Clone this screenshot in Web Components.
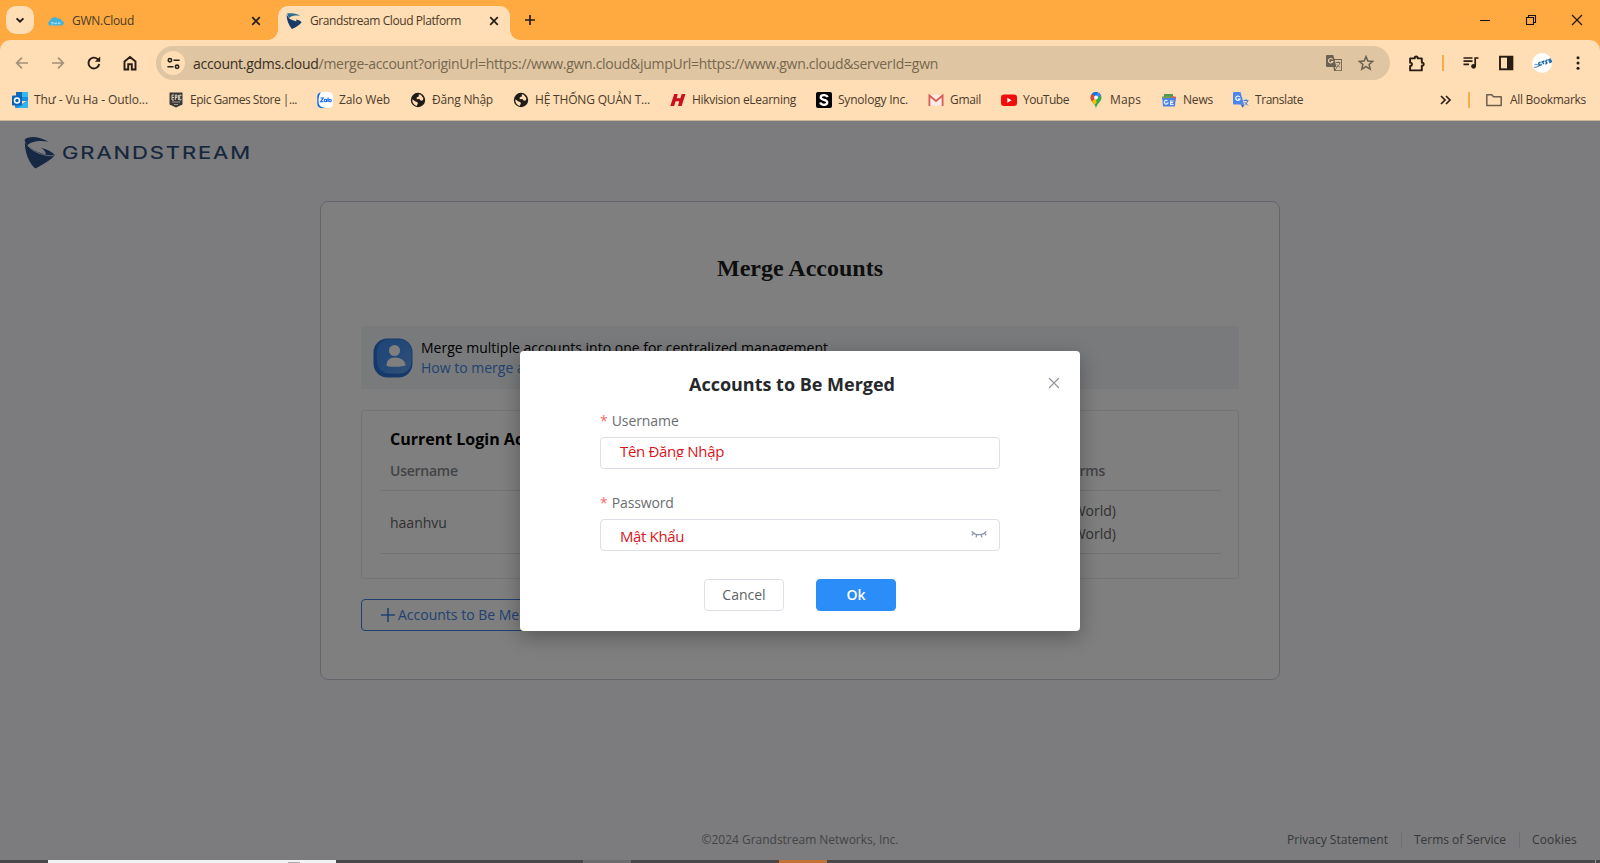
<!DOCTYPE html>
<html lang="en"><head><meta charset="utf-8"><title>Grandstream Cloud Platform</title>
<style>
html,body{margin:0;height:100%;overflow:hidden}
body{font-family:"Open Sans","Noto Sans",sans-serif;font-size:14px}
</style></head><body>
<browser-window></browser-window>
<script>
const define = (name, html, setup) => {
  const t = document.createElement('template');
  t.innerHTML = html;
  customElements.define(name, class extends HTMLElement {
    constructor() {
      super();
      this.attachShadow({mode: 'open'}).appendChild(t.content.cloneNode(true));
    }
    connectedCallback() { if (setup) setup(this, this.shadowRoot); }
  });
};

/* One line of text, tracked so that it fills the width in its w attribute. */
define('fit-text', `<style>:host{display:block;white-space:pre;flex:none}span{display:inline-block}</style><span><slot></slot></span>`,
  (el, root) => {
    const w = +el.getAttribute('w'), s = root.querySelector('span');
    el.style.width = w + 'px';
    const n = [...el.textContent].length;
    s.style.letterSpacing = ((w - s.getBoundingClientRect().width) / n) + 'px';
  });

const ICONS = {
  outlook: `<rect x="4" y="0" width="12" height="9" fill="#1490df"/><rect x="10" y="0" width="6" height="5" fill="#35b8f1"/><rect x="4" y="0" width="6" height="5" fill="#0f6cbd"/><path d="M3 8l7 4 6-4v8H4a1 1 0 0 1-1-1z" fill="#1b8fe0"/><path d="M16 8v8H6z" fill="#33b4f2"/><rect x="0" y="3.5" width="10" height="10" rx="1" fill="#0a64b8"/><circle cx="5" cy="8.500" r="2.500" fill="none" stroke="#fff" stroke-width="1.500"/>`,
  epic: `<path d="M1.500 .5h13v12l-6.500 3-6.500-3z" fill="#3b3a3a"/><path d="M4 3v5M4 3h2M4 5.500h2M4 8h2M7.300 8V3h1.600v2.600H7.300M10.400 3v5M13 4V3h-1.300v5H13V7" stroke="#e8dccb" stroke-width=".9" fill="none"/><path d="M4 10h8M6 12.500h4" stroke="#b9b0a6" stroke-width=".8"/>`,
  zalo: `<rect width="16" height="16" rx="4.500" fill="#fff"/><path d="M4 .2C1.500.5.200 2 .200 5v6c0 3 1.500 5 5 5h6c-4 0-7-.5-8.500-2.500C1 11 1 4 4 .200z" fill="#1268f3"/><g fill="none" stroke="#1268f3" stroke-width="1.100"><path d="M3.500 6h2.800l-2.800 3.800h3"/><circle cx="8.400" cy="8.500" r="1.200"/><path d="M9.700 7v3M11.100 5.500V10"/><circle cx="13.100" cy="8.500" r="1.200"/></g>`,
  globe: `<circle cx="8" cy="8" r="7.200" fill="#1f1b18"/><path d="M2.300 7.200l3.200 2.300 1.700.4.700 1.600-1.200 2.400C3.700 13 2 10.800 2.300 7.200zM6.600 5.600L9 4.200 8.600 2.300l2.200.5 2.500 3.300-.3 2.200-2.100.5-1.600-1.700-2.500.2z" fill="#ffdcb3"/>`,
  hik: `<path d="M4.200 2h3.600L6.700 6.300h3.700L11.700 2H15.500l-3.900 12H8l1.300-4.700H5.600L4.100 14H.3z" fill="#c9101c"/>`,
  synology: `<rect width="16" height="16" rx="2" fill="#000"/><path d="M11.600 5.100C11 3.700 9.700 3.200 8 3.200c-2 0-3.300.9-3.300 2.300 0 3.200 6.600 1.300 6.600 4.800 0 1.500-1.400 2.500-3.300 2.500S4.700 12 4.300 10.500" fill="none" stroke="#fff" stroke-width="2.300"/>`,
  gmail: `<path d="M1 3h14v10.500H1z" fill="#f7ece8"/><path d="M1.400 14V3.500L8 9l6.600-5.500V14" fill="none" stroke="#d95d55" stroke-width="1.800"/>`,
  youtube: `<rect y="2.500" width="16" height="11.500" rx="3" fill="#f20d0d"/><path d="M6.300 5.800v4.900l4.300-2.450z" fill="#fff"/>`,
  maps: `<path d="M8 0a5.500 5.500 0 0 0-5.500 5.500c0 4 4 5.500 5.500 10.500z" fill="#34a853"/><path d="M8 0a5.500 5.500 0 0 1 5.500 5.500C13.500 9.500 9.500 11 8 16z" fill="#34a853"/><path d="M4 1.700L8 5.500 3.700 9.300A7 7 0 0 1 4 1.700z" fill="#ea4335"/><path d="M4 1.700A5.500 5.500 0 0 1 9.800.300L8 5.500z" fill="#1a73e8"/><path d="M9.800.300a5.500 5.500 0 0 1 3.300 3.200L8 5.500z" fill="#4285f4"/><path d="M4 9.500l4-4 .5 5-1.800 2.500z" fill="#fbbc04"/><circle cx="8" cy="5.500" r="2" fill="#fff"/>`,
  news: `<path d="M3 2h9v5H3z" fill="#4f9a52"/><path d="M1 4.500l8-.5v3H1z" fill="#7a9a52"/><path d="M11 4l4 .7-.5 4-4-1z" fill="#dc5a5e"/><path d="M1.300 6h13.400l-.7 8.500H2z" fill="#4a83ea"/><path d="M6.500 8.800A1.900 1.900 0 1 0 7 11H5.500M12.500 9H9.600v3.500h3M9.600 10.700h2.500" fill="none" stroke="#e6eefc" stroke-width="1.200"/>`,
  translate: `<path d="M8 5.500h6.500v9.500H10z" fill="#f0dcc4"/><path d="M1 0h6.500L11 12.500H1a1 1 0 0 1-1-1V1a1 1 0 0 1 1-1z" fill="#4a86ec"/><path d="M7.500 12.500H11L10 16z" fill="#2f62c4"/><path d="M6.800 5A2.200 2.200 0 1 0 7 7H5" fill="none" stroke="#fff" stroke-width="1.200"/><path d="M10.500 8.500h5M13 7.300v1.200M14.500 9c-.5 2-1.500 3-3 4M11.500 10l3.500 3.500" fill="none" stroke="#4a78c8" stroke-width="1"/>`,
  gtrans: `<path d="M7.500 4.500H15a.7.7 0 0 1 .7.7V15a.7.7 0 0 1-.7.700H8.500z" fill="none" stroke="#6d6151" stroke-width="1.100"/><path d="M1 0h6.300L10.500 12H1a1 1 0 0 1-1-1V1a1 1 0 0 1 1-1z" fill="#6d6151"/><path d="M6.600 4.500A2.200 2.200 0 1 0 6.800 6.500H5" fill="none" stroke="#e8cfae" stroke-width="1.200"/><path d="M10 7.500h4.500M12.300 6.500v1M13.800 8c-.5 2-1.500 3-2.800 4M11 9.500l3 3M8 12l1 3.300 2-3.300" fill="none" stroke="#6d6151" stroke-width=".9"/>`,
  folder: `<path d="M.8 13V2.800h5l1.700 1.900h7.700V13.500H.8z" fill="none" stroke="#6b5f50" stroke-width="1.500" stroke-linejoin="round"/>`,
  more: `<path d="M3 4l4 4-4 4M8 4l4 4-4 4" fill="none" stroke="#2a231c" stroke-width="1.700"/>`,
  down: `<path d="M4.600 6.300L8 9.700l3.400-3.400" fill="none" stroke="#1f1a15" stroke-width="1.900"/>`,
  cloud: `<path d="M1.500 12.500C-.5 12 0 8.500 2 8c.5-4 6-5 7.500-2.500 2.500-.5 4.500 1 4.500 2.500 2.500.5 2.500 4.500-.5 4.500z" fill="#43b2da"/><path d="M3 9.500h2v1.500H3.500M6.500 9.500l.6 1.600.6-1.200.6 1.200.6-1.600M10.500 11.200V9.500l1.500 1.600V9.500" stroke="#b5e6fa" stroke-width=".8" fill="none"/>`,
  gs: `<path d="M1 .6C6-.4 11.500.4 14 3 8.500 1.800 5 3 3 5.200z" fill="#2a6f96"/><path d="M.6 1.500l2.800 4.300C6.500 7.500 9 8 10.500 8.500L10 6.500c3 .5 4.500 1.300 5.600 2.700-1.600 2.300-5 5-9.700 6.700C2.500 12 .6 7 .6 1.500z" fill="#173b66"/>`,
  x: `<path d="M4.200 4.200l7.600 7.600M11.800 4.200l-7.600 7.600" stroke="#261d14" stroke-width="1.700" fill="none"/>`,
  plus: `<path d="M8 3v10M3 8h10" stroke="#261d14" stroke-width="1.700" fill="none"/>`,
  min: `<path d="M3 8.500h10" stroke="#1a0f10" stroke-width="1"/>`,
  restore: `<path d="M3.500 5.500h7v7h-7zM5.500 5.500v-2h7v7h-2" fill="none" stroke="#1a0f10" stroke-width="1.100"/>`,
  close: `<path d="M3 3l10 10M13 3L3 13" stroke="#1a0f10" stroke-width="1.100"/>`,
  back: `<path d="M14 8H3M8 2.700L2.700 8 8 13.300" fill="none" stroke="#a49078" stroke-width="1.700"/>`,
  fwd: `<path d="M2 8h11M8 2.700L13.300 8 8 13.300" fill="none" stroke="#a49078" stroke-width="1.700"/>`,
  reload: `<path d="M13.200 9A5.400 5.400 0 1 1 11.600 4.100L13.200 5.600" fill="none" stroke="#261d14" stroke-width="1.900"/><path d="M14.200 1.500v5.300H8.900z" fill="#261d14"/>`,
  home: `<path d="M2.500 6.500L8 2l5.500 4.500v8h-3.700V9.300H6.200v5.200H2.500z" fill="none" stroke="#261d14" stroke-width="1.900"/>`,
  tune: `<g fill="none" stroke="#2b241c" stroke-width="1.700"><circle cx="4.200" cy="4.500" r="1.800"/><path d="M8 4.500H14.500M1.500 11.500H8"/><circle cx="11.800" cy="11.500" r="1.800"/></g>`,
  star: `<path d="M8 1.600l1.900 4.400 4.800.4-3.600 3.100 1.100 4.700L8 11.700l-4.200 2.500 1.100-4.700L1.300 6.400l4.800-.4z" fill="none" stroke="#6b5f50" stroke-width="1.500"/>`,
  puzzle: `<path d="M2 3.200h4.300C5.800 .9 9.600 .9 9.100 3.200h3.900v4c2.400-.5 2.400 3.400 0 2.900v4.400H2v-4.200c2.300-.1 2.300-3 0-3.100z" fill="none" stroke="#261d14" stroke-width="1.800" stroke-linejoin="round"/>`,
  queue: `<path d="M.500 3h9M.5 6.200h9M.5 9.400h5.500M12.200 11V3h3.300" fill="none" stroke="#261d14" stroke-width="1.700"/><circle cx="10.600" cy="11.300" r="2.400" fill="#261d14"/>`,
  side: `<rect x="2" y="1.700" width="12.400" height="12.600" fill="none" stroke="#261d14" stroke-width="1.900"/><rect x="9" y="1.700" width="5" height="12.600" fill="#261d14"/>`,
  avatar: `<circle cx="8" cy="8" r="8" fill="#fff"/><path d="M2 9.500c1.500-1.500 2 .5 3-.2M1.500 11.500c2 0 3-.5 4-1" stroke="#6aa0c8" stroke-width=".9" fill="none"/><path d="M6.800 7.300l-1.500.8.500 2 1.500-.6v-.9M7.500 7.300l2.500-.9M8.700 7l.6 2M10.500 8.700c2 0 1.500-1.200.8-1.500S11.500 5.500 12.500 5.500M15.200 4.700l-1.700.6.300 1 1.400-.2.200 1-1.600.7" stroke="#1b6aa8" stroke-width="1.100" fill="none"/>`,
  dots: `<circle cx="8" cy="2.800" r="1.500" fill="#261d14"/><circle cx="8" cy="8" r="1.500" fill="#261d14"/><circle cx="8" cy="13.200" r="1.500" fill="#261d14"/>`,
  eye: `<path d="M.8 4.300C4 8.800 12 8.800 15.200 4.300M2.600 6.200L.8 8.300M5.700 7.600l-.6 2.700M10.300 7.600l.6 2.700M13.400 6.200l1.800 2.100" fill="none" stroke="#8a95a5" stroke-width="1.300"/>`,
  mclose: `<path d="M3 3l10 10M13 3L3 13" stroke="#909399" stroke-width="1.100"/>`,
  add: `<path d="M8 1v14M1 8h14" stroke="#4384e4" stroke-width="1.600"/>`
};
define('ui-icon', `<style>:host{display:block;flex:none;width:16px;height:16px}svg{display:block;width:100%;height:100%}</style><svg viewBox="0 0 16 16"></svg>`,
  (el, root) => {
    root.querySelector('svg').innerHTML = ICONS[el.getAttribute('name')] || '';
    const s = el.getAttribute('size');
    if (s) el.style.width = el.style.height = s + 'px';
  });

define('browser-tab', `<style>
:host{display:flex;align-items:center;box-sizing:border-box;height:34px;width:232px;padding:0 8px 5px;gap:8px;font-size:12px;color:#4a3a28;position:relative}
:host([active]){background:#ffddb5;border-radius:10px 10px 0 0}
:host([active])::before,:host([active])::after{content:"";position:absolute;bottom:0;width:10px;height:10px}
:host([active])::before{left:-10px;background:radial-gradient(circle at 0 0,transparent 9.500px,#ffddb5 10px)}
:host([active])::after{right:-10px;background:radial-gradient(circle at 100% 0,transparent 9.500px,#ffddb5 10px)}
.t{flex:1}</style><slot name="icon"></slot><div class="t"><slot></slot></div><ui-icon name="x"></ui-icon>`);

define('tab-strip', `<style>
:host{display:flex;height:40px;box-sizing:border-box;padding-top:6px;background:#ffaa40}
.s{width:28px;height:28px;border-radius:10px;background:#ffddb5;margin:0 6px;display:grid;place-items:center}
.new{margin:6px 0 0 12px}
.first{margin-right:6px}
.w{display:flex;gap:30px;margin:6px 15px 0 auto}
</style><div class="s"><ui-icon name="down"></ui-icon></div>
<browser-tab class="first"><ui-icon slot="icon" name="cloud"></ui-icon><fit-text w="62">GWN.Cloud</fit-text></browser-tab>
<browser-tab active><ui-icon slot="icon" name="gs"></ui-icon><fit-text w="151">Grandstream Cloud Platform</fit-text></browser-tab>
<ui-icon class="new" name="plus"></ui-icon>
<div class="w"><ui-icon name="min"></ui-icon><ui-icon name="restore"></ui-icon><ui-icon name="close"></ui-icon></div>`);

define('address-bar', `<style>
:host{display:flex;align-items:center;box-sizing:border-box;width:1234px;height:34px;border-radius:17px;background:#dfc5a1;padding:0 16px 0 5px;color:#766750}
.i{width:24px;height:24px;border-radius:50%;background:#ffddb5;display:grid;place-items:center;margin-right:8px}
b{font-weight:400;color:#3a2f23}.e{margin-left:auto;display:flex;gap:16px;align-items:center}
</style><div class="i"><ui-icon name="tune" size="15"></ui-icon></div><fit-text w="745"><b>account.gdms.cloud</b>/merge-account?originUrl=https://www.gwn.cloud&amp;jumpUrl=https://www.gwn.cloud&amp;serverId=gwn</fit-text>
<div class="e"><ui-icon name="gtrans"></ui-icon><ui-icon name="star"></ui-icon></div>`);

define('nav-toolbar', `<style>
:host{display:flex;align-items:center;height:46px;box-sizing:border-box;padding:0 14px}
.n{display:flex;gap:20px;margin-right:18px}.r{display:flex;align-items:center;margin-left:18px}
i{width:2px;height:16px;background:#f5ad4c;margin:0 19px 0 17px}
</style><div class="n"><ui-icon name="back"></ui-icon><ui-icon name="fwd"></ui-icon><ui-icon name="reload"></ui-icon><ui-icon name="home"></ui-icon></div>
<address-bar></address-bar>
<div class="r"><ui-icon name="puzzle" size="17"></ui-icon><i></i><ui-icon name="queue"></ui-icon><ui-icon name="side" style="margin:0 18px 0 19px"></ui-icon><ui-icon name="avatar" size="20"></ui-icon><ui-icon name="dots" style="margin-left:18px"></ui-icon></div>`);

define('book-mark', `<style>:host{display:flex;align-items:center;gap:6px;flex:none}</style><ui-icon></ui-icon><slot></slot>`,
  (el, root) => { const i = root.querySelector('ui-icon'); i.setAttribute('name', el.getAttribute('icon')); i.shadowRoot.querySelector('svg').innerHTML = ICONS[el.getAttribute('icon')]; });

define('bookmarks-bar', `<style>
:host{display:flex;align-items:center;height:34px;padding:0 14px 0 12px;margin-top:-3px;font-size:12px;color:#4a3c2c;gap:20px}
fit-text{margin-top:-1px}
.e{margin-left:auto;display:flex;align-items:center}i{width:2px;height:16px;background:#f5ad4c;margin:0 16px 0 14px}
</style>
<book-mark icon="outlook"><fit-text w="114">Thư - Vu Ha - Outlo...</fit-text></book-mark>
<book-mark icon="epic"><fit-text w="107">Epic Games Store |...</fit-text></book-mark>
<book-mark icon="zalo"><fit-text w="51">Zalo Web</fit-text></book-mark>
<book-mark icon="globe"><fit-text w="61">Đăng Nhập</fit-text></book-mark>
<book-mark icon="globe"><fit-text w="115">HỆ THỐNG QUẢN T...</fit-text></book-mark>
<book-mark icon="hik"><fit-text w="104">Hikvision eLearning</fit-text></book-mark>
<book-mark icon="synology"><fit-text w="70">Synology Inc.</fit-text></book-mark>
<book-mark icon="gmail"><fit-text w="31">Gmail</fit-text></book-mark>
<book-mark icon="youtube"><fit-text w="46">YouTube</fit-text></book-mark>
<book-mark icon="maps" style="margin-left:-1px"><fit-text w="31">Maps</fit-text></book-mark>
<book-mark icon="news"><fit-text w="30">News</fit-text></book-mark>
<book-mark icon="translate"><fit-text w="48">Translate</fit-text></book-mark>
<div class="e"><ui-icon name="more"></ui-icon><i></i><book-mark icon="folder" style="gap:8px"><fit-text w="76">All Bookmarks</fit-text></book-mark></div>`);

define('browser-chrome', `<style>
:host{display:block;height:121px;background:#ffaa40;box-sizing:border-box}
.b{background:#ffddb5;border-radius:10px 10px 0 0;height:81px;box-sizing:border-box;border-bottom:1px solid #cdb594}
</style><tab-strip></tab-strip><div class="b"><nav-toolbar></nav-toolbar><bookmarks-bar></bookmarks-bar></div>`);

define('brand-logo', `<style>:host{display:block;width:230px;height:34px}svg{display:block}</style>
<svg width="230" height="34" viewBox="0 0 230 34"><g fill="#2c5088"><path d="M.6 3.800C4-.2 15-.2 24.500 5.800 14.500 4 6.500 6 3.400 9.400 1.800 7.500.9 5.700.6 3.800z"/><path d="M.8 6.600C6 13 14 17 22 18.600 21.500 15.500 20 13.500 17 11.700 24 13.500 28.500 16 30.800 19 28.500 23 20 28 11.500 32.600 8.500 31 1 21 .8 6.600z"/></g><path d="M3.500 9.500C9 16 20 20.500 30 19.700" fill="none" stroke="#f8f9fb" stroke-width=".8"/>
<text x="38" y="23.200" font-family="Inter,sans-serif" font-size="17" font-weight="400" fill="#2c4c78" stroke="#2c4c78" stroke-width=".2" textLength="190" lengthAdjust="spacingAndGlyphs" letter-spacing="1.500">GRANDSTREAM</text></svg>`);

define('info-banner', `<style>
:host{display:flex;align-items:center;height:63px;background:#f3f5f8;padding-left:12px;gap:8px;line-height:20px;color:#000;border-radius:2px}
a{color:#4384e4;display:block}svg{display:block;margin-top:1px}
</style><svg width="40" height="40" viewBox="0 0 40 40"><defs><linearGradient id="g" x1="0" y1="0" x2="1" y2="1"><stop offset="0" stop-color="#3a8cf2"/><stop offset=".5" stop-color="#4a93f0"/><stop offset="1" stop-color="#66a2ee"/></linearGradient></defs><rect x=".5" y=".5" width="39" height="39" rx="14" fill="#2a72d4"/><rect x="4" y="1.500" width="34.500" height="34" rx="12" fill="url(#g)"/><circle cx="21.500" cy="12.500" r="5.500" fill="#fff"/><path d="M13.500 27.500c0-5 3-8 8.500-8s10.500 3.500 10.500 7.500c0 2-19 2.500-19 .5z" fill="#fff"/></svg>
<div><fit-text w="407">Merge multiple accounts into one for centralized management</fit-text><a>How to merge accounts?</a></div>`);

define('account-panel', `<style>
:host{display:block;box-sizing:border-box;height:169px;border:1px solid #e6e9ee;border-radius:3px;padding:16px 17px 0 18px}
h3{margin:0 0 0 10px;font-size:16px;line-height:24px;font-weight:700;color:#000}
.r{display:flex;justify-content:space-between;align-items:center;border-bottom:1px solid #e4e7ec;padding:0 0 0 10px;box-sizing:border-box;color:#606266}
.h{height:40px;font-weight:600;color:#85878c;letter-spacing:-.25px}.d{height:63px;line-height:23px}
.h div:last-child{margin-right:116px}.d div:last-child{margin-right:105px;text-align:right}
</style><h3>Current Login Account</h3><div class="r h"><div>Username</div><div>Platforms</div></div>
<div class="r d"><div>haanhvu</div><div>(World)<br>(World)</div></div>`);

define('merge-card', `<style>
:host{display:flex;flex-direction:column;box-sizing:border-box;width:960px;height:479px;border:1px solid #c4cad2;border-radius:8px;background:#fff;padding:0 40px;margin:0 auto}
h1{font:bold 24px/30px "Liberation Serif",serif;margin:51px auto 0;color:#1c1c1e;height:73px}
account-panel{margin-top:21px}
.btn{display:flex;align-items:center;gap:2px;box-sizing:border-box;width:200px;height:32px;margin-top:20px;border:1px solid #3f80dc;border-radius:4px;padding-left:18px;color:#4384e4}
.btn span{margin-top:-2px}
</style><h1>Merge Accounts</h1><info-banner></info-banner><account-panel></account-panel>
<div class="btn"><ui-icon name="add"></ui-icon><span>Accounts to Be Merged</span></div>`);

define('page-footer', `<style>
:host{display:grid;grid-template-columns:1fr auto 1fr;align-items:center;height:16px;font-size:12px;color:#85888e;padding:0 23px}
.l{display:flex;justify-content:flex-end;align-items:center;color:#6d7076}i{width:1px;height:16px;background:#dcdfe6;margin:0 12.500px}
</style><span></span><fit-text w="197">©2024 Grandstream Networks, Inc.</fit-text><div class="l"><fit-text w="101">Privacy Statement</fit-text><i></i><fit-text w="92">Terms of Service</fit-text><i></i><fit-text w="45">Cookies</fit-text></div>`);

define('form-field', `<style>
:host{display:block}label{display:flex;gap:4px;line-height:20px;color:#6b6d71}label span{color:#f56c6c}
.b{display:flex;align-items:center;justify-content:space-between;box-sizing:border-box;width:400px;height:32px;border:1px solid #dcdfe6;border-radius:4px;margin-top:6px;padding:0 12px 0 19px;color:#d8151c;font-size:15px}
</style><label><span>*</span><slot name="label"></slot></label><div class="b"><slot></slot><slot name="end"></slot></div>`);

define('merge-dialog', `<style>
:host{display:block;box-sizing:border-box;width:560px;height:280px;border-radius:4px;background:#fff;box-shadow:0 6px 20px rgba(0,0,0,.3);padding:19px 80px 0}
header{display:flex;height:27px;align-items:center;margin-right:-62px;color:#26282b;font-size:18px;font-weight:700;padding-left:89px;justify-content:space-between}
header ui-icon{margin-top:-2px}
form-field{margin-top:14px}form-field+form-field{margin-top:24px}
.user{position:relative;margin-top:-4px}
.user::after{content:"";position:absolute;left:57px;width:9px;bottom:-1px;height:5px;background:#fff}
.pass{margin-top:1px}
.a{display:flex;justify-content:center;gap:32px;margin-top:28px}
.a div{box-sizing:border-box;width:80px;height:32px;line-height:30px;border:1px solid #dcdfe6;border-radius:4px;text-align:center;color:#606266}
.a .p{background:#2a8df8;border-color:#2a8df8;color:#fff;font-weight:600}
</style><header><fit-text w="206">Accounts to Be Merged</fit-text><ui-icon name="mclose"></ui-icon></header>
<form-field><fit-text slot="label" w="67">Username</fit-text><fit-text class="user" w="104">Tên Đăng Nhập</fit-text></form-field>
<form-field><fit-text slot="label" w="62">Password</fit-text><fit-text class="pass" w="64">Mật Khẩu</fit-text><ui-icon slot="end" name="eye"></ui-icon></form-field>
<div class="a"><div>Cancel</div><div class="p">Ok</div></div>`);

define('cloud-page', `<style>
:host{display:flex;flex-direction:column;position:relative;height:739px;background:#f8f9fc;box-sizing:border-box}
brand-logo{margin:15px 0 30px 24px;height:35px}
page-footer{margin:auto 0 13px}
.mask{position:absolute;inset:0;background:rgba(0,0,0,.5);display:flex;justify-content:center;align-items:flex-start;padding-top:230px}
</style><brand-logo></brand-logo><merge-card></merge-card><page-footer></page-footer><div class="mask"><merge-dialog></merge-dialog></div>`);

define('task-bar', `<style>
:host{display:flex;height:3px;background:#48484a}
.s{width:288px;margin-left:48px;background:#f1f2f3;display:flex}.s i{width:12px;height:1px;margin:2px 0 0 240px;background:#a9a9aa}
.g{width:48px;margin-left:247px;background:#6c6c6e}.o{width:48px;margin-left:148px;background:#c27438}.d{width:1px;margin:0 4px 0 auto;background:#9a9a9c}
</style><div class="s"><i></i></div><div class="g"></div><div class="o"></div><div class="d"></div>`);

define('browser-window', `<style>:host{display:block;width:1600px;height:863px;overflow:hidden}</style><browser-chrome></browser-chrome><cloud-page></cloud-page><task-bar></task-bar>`);
</script></body></html>
